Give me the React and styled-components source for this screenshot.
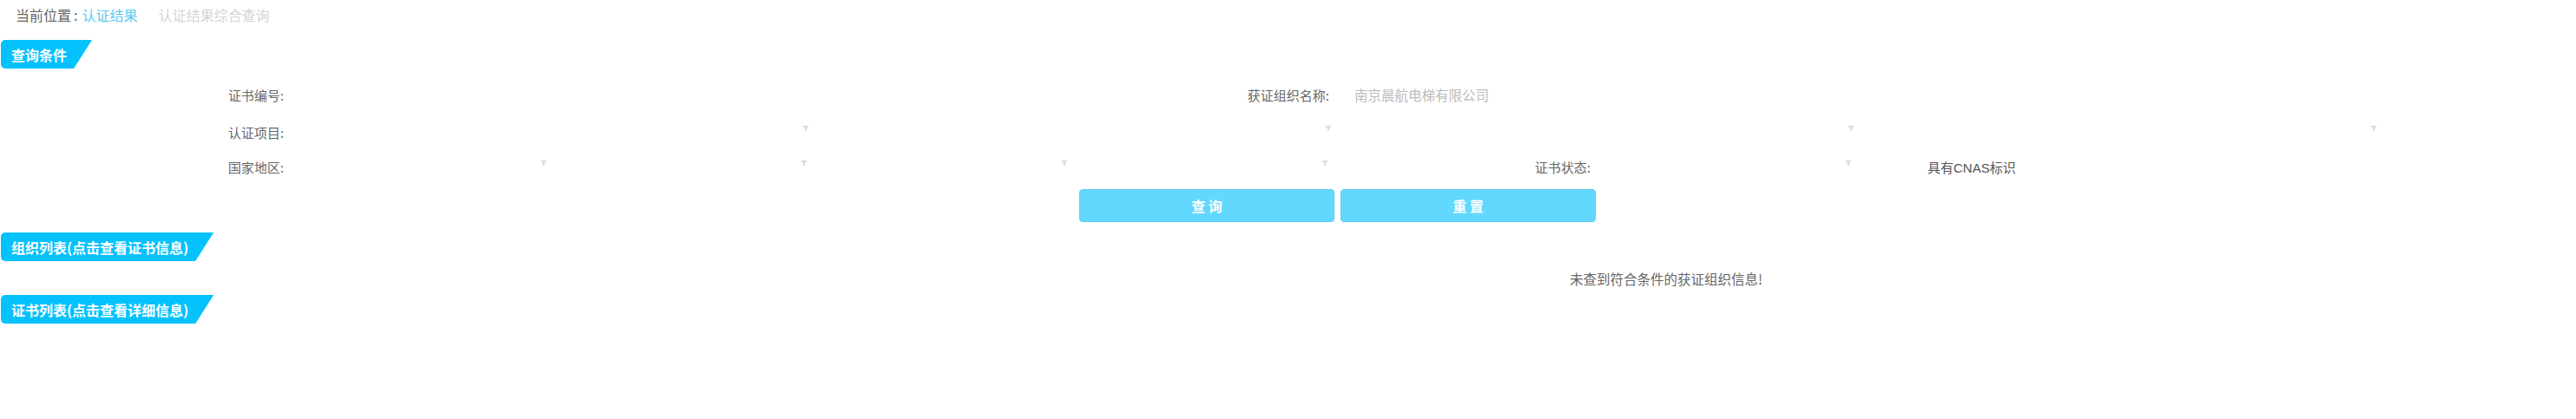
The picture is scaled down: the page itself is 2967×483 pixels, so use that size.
import React from 'react';
import styled, { createGlobalStyle } from 'styled-components';

const GlobalStyle = createGlobalStyle`
  body {
    margin: 0;
    background: #fff;
    font-family: "Noto Sans CJK SC", "Liberation Sans", sans-serif;
  }
`;

const Page = styled.div`
  width: 2967px;
  height: 483px;
  overflow: hidden;
`;

const Breadcrumb = styled.div`
  display: flex;
  align-items: center;
  height: 34px;
  padding-left: 18px;
  font-size: 16px;
  color: #666;
`;

const Crumb = styled.span`
  margin-left: ${(p) => p.$gap || 0}px;
  color: ${(p) => (p.$tone === 'link' ? '#5ccbee' : p.$tone === 'muted' ? '#d4d4d4' : '#666')};
`;

const SectionTitle = styled.div`
  display: flex;
  align-items: center;
  width: max-content;
  height: 33px;
  margin: ${(p) => p.$top || 0}px 0 0 1px;
  padding: 0 29px 0 12px;
  background: #05c2fd;
  color: #fff;
  font-size: 16px;
  font-weight: bold;
  border-radius: 5px 0 0 5px;
  clip-path: polygon(0 0, 100% 0, calc(100% - 21px) 100%, 0 100%);
`;

const Form = styled.div`
  padding-top: 10px;
`;

const Row = styled.div`
  display: flex;
  align-items: center;
  height: ${(p) => p.$h}px;
  font-size: 15px;
  color: #666;
`;

const Label = styled.div`
  width: ${(p) => p.$w}px;
  padding-right: ${(p) => p.$gap || 0}px;
  box-sizing: border-box;
  text-align: right;
  white-space: nowrap;
  flex-shrink: 0;
`;

const Field = styled.div`
  width: ${(p) => p.$w}px;
  padding-left: ${(p) => p.$pad || 0}px;
  box-sizing: border-box;
  flex-shrink: 0;
  font-size: 15.5px;
  color: #bbb;
  white-space: nowrap;
`;

const Select = styled.div`
  display: flex;
  justify-content: flex-end;
  align-items: center;
  width: ${(p) => p.$w}px;
  height: 30px;
  padding-right: 2px;
  box-sizing: border-box;
  flex-shrink: 0;

  svg {
    margin-bottom: 8px;
  }
`;

const CheckLabel = styled.div`
  padding-left: 85px;
  font-family: "Liberation Sans", "Noto Sans CJK SC", sans-serif;
  color: #555;
  white-space: nowrap;
`;

const Actions = styled.div`
  display: flex;
  gap: 7px;
  margin-top: 9px;
  padding-left: 1243px;
`;

const Button = styled.button`
  width: 294px;
  height: 38px;
  background: #62d8ff;
  border: 1px solid #5ccaf7;
  border-radius: 4px;
  color: #fff;
  font-family: inherit;
  font-size: 16px;
  font-weight: bold;
  white-space: pre;
`;

const Empty = styled.div`
  margin-top: 10px;
  height: 20px;
  line-height: 20px;
  padding-left: 1808px;
  font-size: 15.5px;
  color: #666;
  white-space: nowrap;
`;

const Arrow = () => (
  <svg width="8" height="6" viewBox="0 0 8 6">
    <path d="M0 0H8L5 3V6H3V3Z" fill="#dcdcdc" />
  </svg>
);

const Dropdown = ({ w }) => (
  <Select $w={w}>
    <Arrow />
  </Select>
);

export default function App() {
  return (
    <Page>
      <GlobalStyle />
      <Breadcrumb>
        <Crumb>当前位置</Crumb>
        <Crumb $gap={3}>:</Crumb>
        <Crumb $tone="link" $gap={5}>认证结果</Crumb>
        <Crumb $tone="muted" $gap={24}>认证结果综合查询</Crumb>
      </Breadcrumb>

      <SectionTitle $top={12}>查询条件</SectionTitle>

      <Form>
        <Row $h={40}>
          <Label $w={332} $gap={5}>证书编号:</Label>
          <Field $w={1100} />
          <Label $w={99}>获证组织名称:</Label>
          <Field $w={600} $pad={29}>南京晨航电梯有限公司</Field>
        </Row>
        <Row $h={46}>
          <Label $w={332} $gap={5}>认证项目:</Label>
          <Dropdown w={602} />
          <Dropdown w={602} />
          <Dropdown w={602} />
          <Dropdown w={602} />
        </Row>
        <Row $h={34}>
          <Label $w={332} $gap={5}>国家地区:</Label>
          <Dropdown w={300} />
          <Dropdown w={300} />
          <Dropdown w={300} />
          <Dropdown w={300} />
          <Label $w={300}>证书状态:</Label>
          <Dropdown w={303} />
          <CheckLabel>具有CNAS标识</CheckLabel>
        </Row>
      </Form>

      <Actions>
        <Button>查 询</Button>
        <Button>重 置</Button>
      </Actions>

      <SectionTitle $top={12}>组织列表(点击查看证书信息)</SectionTitle>
      <Empty>未查到符合条件的获证组织信息!</Empty>
      <SectionTitle $top={9}>证书列表(点击查看详细信息)</SectionTitle>
    </Page>
  );
}
